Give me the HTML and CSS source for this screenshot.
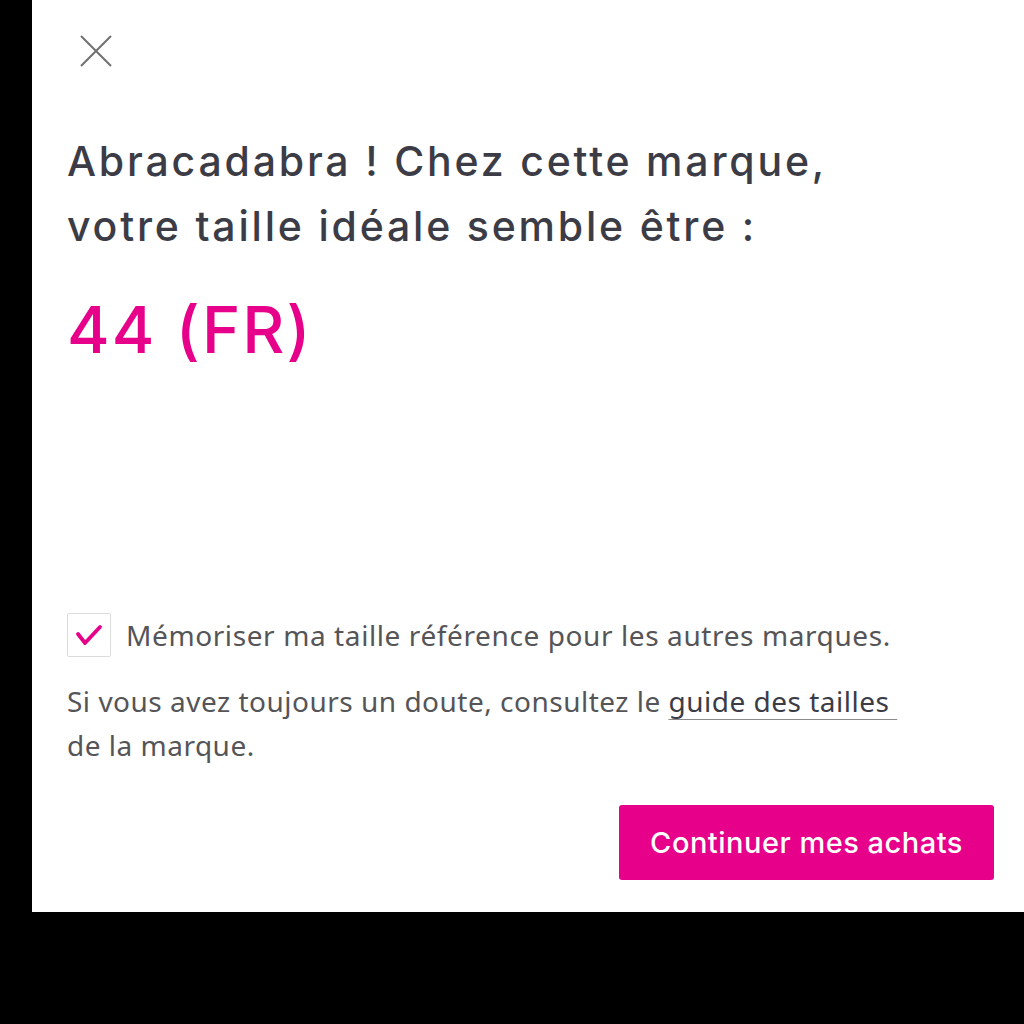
FILE: index.html
```html
<!DOCTYPE html>
<html lang="fr">
<head>
<meta charset="utf-8">
<title>Taille idéale</title>
<link rel="stylesheet" href="styles.css">
</head>
<body>
<div class="panel">
  <button class="close" aria-label="Fermer">
    <svg width="32" height="32" viewBox="0 0 32 32"><path d="M1 1 L31 31 M31 1 L1 31" stroke="#707070" stroke-width="2" fill="none"/></svg>
  </button>
  <h1 class="title">Abracadabra ! Chez cette marque,<br>votre taille idéale semble être :</h1>
  <div class="size">44 (FR)</div>
  <div class="spacer"></div>
  <label class="remember">
    <span class="box">
      <svg width="28" height="24" viewBox="0 0 28 24"><path d="M3 11 L10 20 L25 4" stroke="#e6008a" stroke-width="3.8" fill="none" stroke-linecap="round" stroke-linejoin="round"/></svg>
    </span>
    <span class="label-text">Mémoriser ma taille référence pour les autres marques.</span>
  </label>
  <p class="hint">Si vous avez toujours un doute, consultez le <a href="#" class="link">guide des tailles&nbsp;</a><br>de la marque.</p>
  <div class="actions">
    <button class="cta">Continuer mes achats</button>
  </div>
</div>
</body>
</html>
```
FILE: styles.css
```css
html, body {
  margin: 0;
  padding: 0;
  background: #000;
}
body {
  width: 1024px;
  height: 1024px;
}
.panel {
  margin-left: 32px;
  width: 992px;
  height: 912px;
  background: #fff;
  box-sizing: border-box;
  padding: 35px 30px 32px 35px;
  display: flex;
  flex-direction: column;
}
.close {
  border: 0;
  background: none;
  padding: 0;
  margin-left: 13px;
  width: 32px;
  height: 32px;
  cursor: pointer;
  display: block;
}
.title {
  font-family: Inter, "Noto Sans", sans-serif;
  font-weight: 500;
  font-size: 41px;
  line-height: 65px;
  color: #3c3c46;
  margin: 62px 0 0 0;
  letter-spacing: 2.8px;
}
.size {
  font-family: Inter, "Noto Sans", sans-serif;
  font-weight: 500;
  font-size: 65px;
  line-height: 80px;
  color: #e6008a;
  margin-top: 31px;
  letter-spacing: 2px;
}
.spacer {
  flex: 1;
}
.remember {
  display: flex;
  align-items: center;
  gap: 15px;
  font-family: "Noto Sans", sans-serif;
  font-size: 28px;
  letter-spacing: 0.6px;
  color: #555558;
}
.box {
  width: 42px;
  height: 42px;
  border: 1px solid #dcdcdc;
  border-radius: 2px;
  display: flex;
  align-items: center;
  justify-content: center;
  box-sizing: content-box;
}
.hint {
  font-family: "Noto Sans", sans-serif;
  font-size: 28px;
  letter-spacing: 0.5px;
  line-height: 44px;
  color: #555558;
  margin: 22px 0 0 0;
}
.link {
  color: #3c3c46;
  text-decoration: underline;
  text-decoration-color: #8a8a8a;
  text-underline-offset: 7px;
  text-decoration-thickness: 1px;
}
.actions {
  display: flex;
  justify-content: flex-end;
  margin-top: 38px;
}
.cta {
  background: #e6008a;
  color: #fff;
  border: 0;
  border-radius: 3px;
  width: 375px;
  height: 75px;
  font-family: Inter, "Noto Sans", sans-serif;
  font-weight: 500;
  font-size: 29px;
  letter-spacing: 0.5px;
  cursor: pointer;
}
```
